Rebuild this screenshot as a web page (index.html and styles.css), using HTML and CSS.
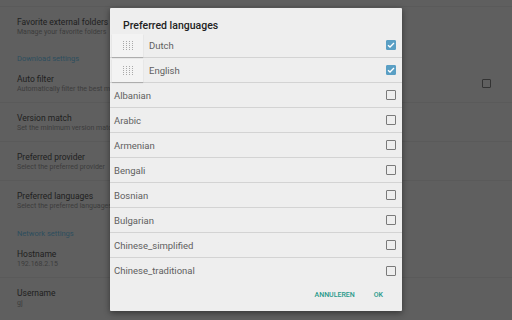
FILE: index.html
```html
<!DOCTYPE html>
<html lang="en">
<head>
  <meta charset="UTF-8" />
  <meta name="viewport" content="width=device-width, initial-scale=1.0" />
  <title>Settings</title>
  <link rel="stylesheet" href="styles.css">
</head>
<body>

  <main class="settings">
    <div class="item item-top">
      <div class="item-title">Favorite external folders</div>
      <div class="item-sub">Manage your favorite folders</div>
    </div>
    <div class="section">Download settings</div>
    <div class="item item-row">
      <div class="item-text">
        <div class="item-title">Auto filter</div>
        <div class="item-sub">Automatically filter the best match</div>
      </div>
      <span class="bg-check"></span>
    </div>
    <div class="item">
      <div class="item-title">Version match</div>
      <div class="item-sub">Set the minimum version match</div>
    </div>
    <div class="item">
      <div class="item-title">Preferred provider</div>
      <div class="item-sub">Select the preferred provider</div>
    </div>
    <div class="item last">
      <div class="item-title">Preferred languages</div>
      <div class="item-sub">Select the preferred languages</div>
    </div>
    <div class="section">Network settings</div>
    <div class="item">
      <div class="item-title">Hostname</div>
      <div class="item-sub">192.168.2.15</div>
    </div>
    <div class="item last">
      <div class="item-title">Username</div>
      <div class="item-sub">gj</div>
    </div>
  </main>

  <div class="dialog">
    <h2 class="dialog-title">Preferred languages</h2>
    <ul class="langs">
      <li class="lang sortable">
        <span class="handle">
          <svg width="10" height="9" viewBox="0 0 10 9">
            <g fill="#a9a9a9">
              <rect x="0" y="0" width="1" height="1"/><rect x="3" y="0" width="1" height="1"/><rect x="6" y="0" width="1" height="1"/><rect x="9" y="0" width="1" height="1"/>
              <rect x="0" y="2" width="1" height="1"/><rect x="3" y="2" width="1" height="1"/><rect x="6" y="2" width="1" height="1"/><rect x="9" y="2" width="1" height="1"/>
              <rect x="0" y="4" width="1" height="1"/><rect x="3" y="4" width="1" height="1"/><rect x="6" y="4" width="1" height="1"/><rect x="9" y="4" width="1" height="1"/>
              <rect x="0" y="6" width="1" height="1"/><rect x="3" y="6" width="1" height="1"/><rect x="6" y="6" width="1" height="1"/><rect x="9" y="6" width="1" height="1"/>
              <rect x="0" y="8" width="1" height="1"/><rect x="3" y="8" width="1" height="1"/><rect x="6" y="8" width="1" height="1"/><rect x="9" y="8" width="1" height="1"/>
            </g>
          </svg>
        </span>
        <span class="lang-name">Dutch</span>
        <span class="check checked"><svg width="8" height="6" viewBox="0 0 8 6"><path d="M1 3.2 L3 5 L7 1" fill="none" stroke="#fff" stroke-width="1.3"/></svg></span>
      </li>
      <li class="lang sortable">
        <span class="handle">
          <svg width="10" height="9" viewBox="0 0 10 9">
            <g fill="#a9a9a9">
              <rect x="0" y="0" width="1" height="1"/><rect x="3" y="0" width="1" height="1"/><rect x="6" y="0" width="1" height="1"/><rect x="9" y="0" width="1" height="1"/>
              <rect x="0" y="2" width="1" height="1"/><rect x="3" y="2" width="1" height="1"/><rect x="6" y="2" width="1" height="1"/><rect x="9" y="2" width="1" height="1"/>
              <rect x="0" y="4" width="1" height="1"/><rect x="3" y="4" width="1" height="1"/><rect x="6" y="4" width="1" height="1"/><rect x="9" y="4" width="1" height="1"/>
              <rect x="0" y="6" width="1" height="1"/><rect x="3" y="6" width="1" height="1"/><rect x="6" y="6" width="1" height="1"/><rect x="9" y="6" width="1" height="1"/>
              <rect x="0" y="8" width="1" height="1"/><rect x="3" y="8" width="1" height="1"/><rect x="6" y="8" width="1" height="1"/><rect x="9" y="8" width="1" height="1"/>
            </g>
          </svg>
        </span>
        <span class="lang-name">English</span>
        <span class="check checked"><svg width="8" height="6" viewBox="0 0 8 6"><path d="M1 3.2 L3 5 L7 1" fill="none" stroke="#fff" stroke-width="1.3"/></svg></span>
      </li>
      <li class="lang"><span class="lang-name">Albanian</span><span class="check"></span></li>
      <li class="lang"><span class="lang-name">Arabic</span><span class="check"></span></li>
      <li class="lang"><span class="lang-name">Armenian</span><span class="check"></span></li>
      <li class="lang"><span class="lang-name">Bengali</span><span class="check"></span></li>
      <li class="lang"><span class="lang-name">Bosnian</span><span class="check"></span></li>
      <li class="lang"><span class="lang-name">Bulgarian</span><span class="check"></span></li>
      <li class="lang"><span class="lang-name">Chinese_simplified</span><span class="check"></span></li>
      <li class="lang last"><span class="lang-name">Chinese_traditional</span><span class="check"></span></li>
    </ul>
    <div class="actions">
      <button type="button">ANNULEREN</button>
      <button type="button">OK</button>
    </div>
  </div>

</body>
</html>
```

FILE: styles.css
```css
body {
  margin: 0;
  padding: 0;
  width: 512px;
  height: 320px;
  overflow: hidden;
  background: #5f5f5f;
  font-family: Roboto, "Liberation Sans", sans-serif;
  position: relative;
}
.settings {
  padding-top: 6px;
}
.item {
  height: 39px;
  box-sizing: border-box;
  padding: 10px 21px 0 17px;
  border-bottom: 1px solid #5a5a5a;
}
.item-row {
  display: flex;
  align-items: flex-start;
}
.item-top {
  border-top: 1px solid #5a5a5a;
  border-bottom: none;
}
.item.last {
  border-bottom: none;
}
.item-text {
  flex: 1;
}
.item-title {
  font-size: 8.5px;
  line-height: 10px;
  color: #1e1e1e;
  white-space: nowrap;
}
.item-sub {
  font-size: 7px;
  line-height: 11px;
  color: #3c3c3c;
  white-space: nowrap;
}
.section {
  height: 19px;
  box-sizing: border-box;
  padding: 9px 17px 0;
  font-size: 7.5px;
  line-height: 10px;
  color: #2d4e5e;
}
.bg-check {
  width: 9px;
  height: 9px;
  box-sizing: border-box;
  margin-top: 5px;
  border: 1.5px solid #333;
  border-radius: 1px;
}
.dialog {
  position: absolute;
  left: 110px;
  top: 8px;
  width: 292px;
  height: 303px;
  background: #eeeeee;
  box-shadow: 0 2px 6px rgba(0, 0, 0, 0.45);
  border-radius: 1px;
}
.dialog-title {
  margin: 0;
  height: 25px;
  box-sizing: border-box;
  padding: 11px 13px 0;
  font-size: 10.5px;
  line-height: 13px;
  font-weight: 500;
  color: #222;
}
.langs {
  list-style: none;
  margin: 0;
  padding: 0;
}
.lang {
  display: flex;
  align-items: center;
  height: 25px;
  box-sizing: border-box;
  padding: 0 6px 0 4px;
  border-bottom: 1px solid #d3d3d3;
}
.lang.last {
  border-bottom: none;
}
.lang.sortable {
  padding-left: 2px;
}
.handle {
  display: flex;
  align-items: center;
  justify-content: center;
  width: 31px;
  height: 23px;
  margin-right: 6px;
  background: #f3f3f3;
  box-shadow: 0 1px 1px rgba(0, 0, 0, 0.18);
}
.lang-name {
  flex: 1;
  font-size: 9.5px;
  color: #606060;
}
.check {
  display: flex;
  align-items: center;
  justify-content: center;
  width: 10px;
  height: 10px;
  box-sizing: border-box;
  border: 1.5px solid #7a7a7a;
  border-radius: 1px;
}
.check.checked {
  background: #5a9fc4;
  border-color: #5a9fc4;
}
.actions {
  display: flex;
  justify-content: flex-end;
  gap: 19px;
  padding: 7px 19px 0 0;
}
button {
  border: none;
  background: none;
  padding: 0;
  font-family: Roboto, "Liberation Sans", sans-serif;
  font-size: 7px;
  font-weight: 500;
  color: #27998a;
  line-height: 10px;
}
```
